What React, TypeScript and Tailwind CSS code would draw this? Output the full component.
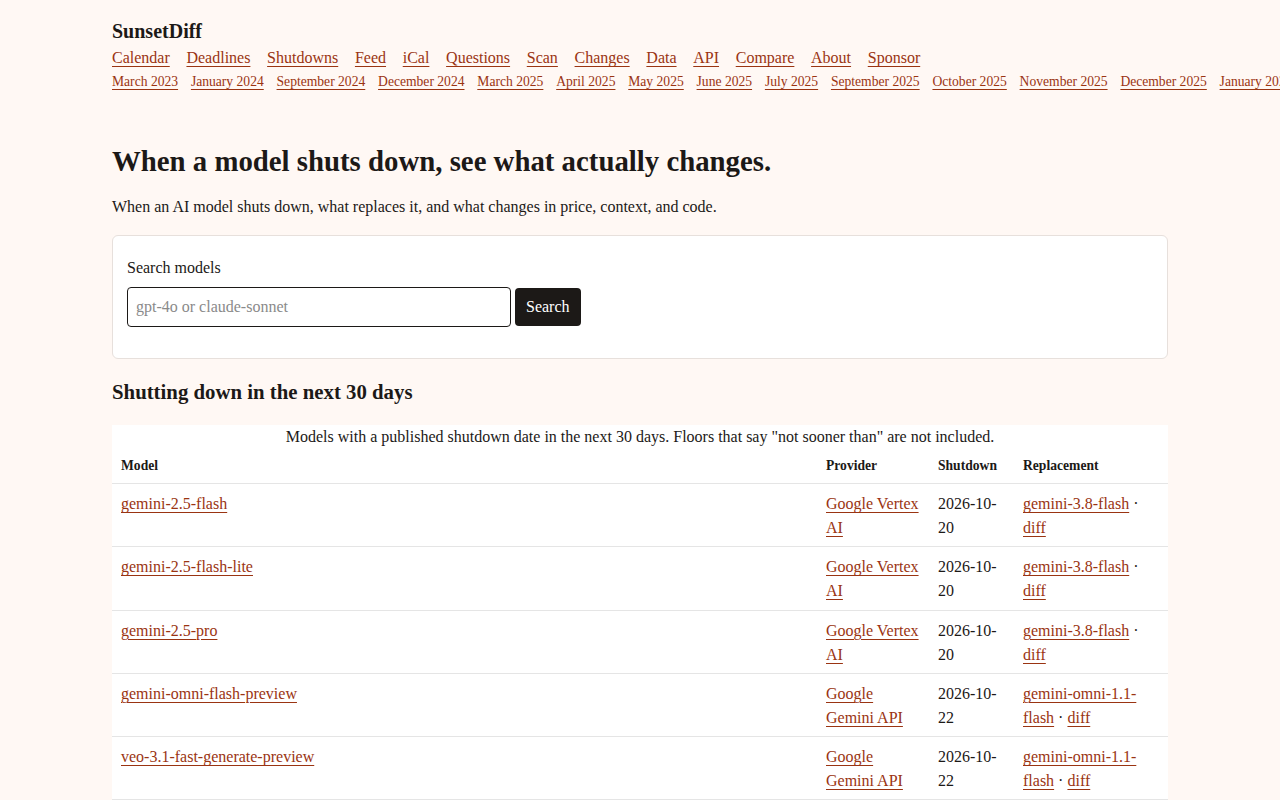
import React from "react";

const mainNav = ["Calendar", "Deadlines", "Shutdowns", "Feed", "iCal", "Questions", "Scan", "Changes", "Data", "API", "Compare", "About", "Sponsor"];
const months = ["March 2023", "January 2024", "September 2024", "December 2024", "March 2025", "April 2025", "May 2025", "June 2025", "July 2025", "September 2025", "October 2025", "November 2025", "December 2025", "January 2026"];

type Row = { model: string; provider: string; date: string; replacement: string };

const rows: Row[] = [
  { model: "gemini-2.5-flash", provider: "Google Vertex AI", date: "2026-10-20", replacement: "gemini-3.8-flash" },
  { model: "gemini-2.5-flash-lite", provider: "Google Vertex AI", date: "2026-10-20", replacement: "gemini-3.8-flash" },
  { model: "gemini-2.5-pro", provider: "Google Vertex AI", date: "2026-10-20", replacement: "gemini-3.8-flash" },
  { model: "gemini-omni-flash-preview", provider: "Google Gemini API", date: "2026-10-22", replacement: "gemini-omni-1.1-flash" },
  { model: "veo-3.1-fast-generate-preview", provider: "Google Gemini API", date: "2026-10-22", replacement: "gemini-omni-1.1-flash" },
];

const link = "text-[#9a3412] underline underline-offset-[3px] decoration-1";

export default function App() {
  return (
    <div
      className="min-h-screen overflow-x-hidden bg-[#fff8f4] text-[#1c1917]"
      style={{ fontFamily: '"Liberation Serif", "Times New Roman", serif' }}
    >
      <div className="mx-auto w-[1056px] pt-[17px] pb-10">
        <header>
          <div className="text-[20px] font-bold leading-[28px]">SunsetDiff</div>
          <nav className="mt-[1px] flex gap-[16.7px] text-[16px] leading-[24px]">
            {mainNav.map((n) => (
              <a key={n} href="#" className={link}>{n}</a>
            ))}
          </nav>
          <nav className="mt-[2px] flex gap-[12.8px] whitespace-nowrap text-[13.6px] leading-[20px]">
            {months.map((m) => (
              <a key={m} href="#" className={link}>{m}</a>
            ))}
          </nav>
        </header>

        <main className="mt-[51px]">
          <h1 className="text-[28.8px] font-bold leading-[36px]">When a model shuts down, see what actually changes.</h1>
          <p className="mt-[16px] text-[16px] leading-[24px]">
            When an AI model shuts down, what replaces it, and what changes in price, context, and code.
          </p>

          <form className="mt-[16px] rounded-[6px] border border-[#e7e0dc] bg-white px-[14px] pt-[20px] pb-[31px]">
            <label className="block text-[16px] leading-[24px]">Search models</label>
            <div className="mt-[7px] flex items-center gap-[4px]">
              <input
                type="text"
                placeholder="gpt-4o or claude-sonnet"
                className="h-[40px] w-[384px] rounded-[4px] border border-[#1c1917] bg-white px-[8px] text-[16px] placeholder:text-[#8a8a8a] outline-none"
                style={{ fontFamily: '"Liberation Serif", serif' }}
              />
              <button
                type="button"
                className="h-[38px] rounded-[4px] bg-[#1c1917] px-[11px] text-[16px] text-white"
                style={{ fontFamily: '"Liberation Serif", serif' }}
              >
                Search
              </button>
            </div>
          </form>

          <h2 className="mt-[19px] text-[20.8px] font-bold leading-[28px]">Shutting down in the next 30 days</h2>

          <div className="mt-[19px] bg-white">
            <div className="text-center text-[16px] leading-[24px]">
              Models with a published shutdown date in the next 30 days. Floors that say "not sooner than" are not included.
            </div>
            <table className="w-full table-fixed border-collapse text-left">
              <colgroup>
                <col className="w-[705px]" />
                <col className="w-[112px]" />
                <col className="w-[85px]" />
                <col className="w-[154px]" />
              </colgroup>
              <thead>
                <tr className="border-b border-[#e5e5e5] text-[13.6px] font-bold leading-[19px]">
                  <th className="px-[9px] pt-[7px] pb-[8px]">Model</th>
                  <th className="px-[9px] pt-[7px] pb-[8px]">Provider</th>
                  <th className="px-[9px] pt-[7px] pb-[8px]">Shutdown</th>
                  <th className="px-[9px] pt-[7px] pb-[8px]">Replacement</th>
                </tr>
              </thead>
              <tbody className="text-[16px] leading-[24px]">
                {rows.map((r) => (
                  <tr key={r.model} className="border-b border-[#e5e5e5] align-top">
                    <td className="px-[9px] pt-[8px] pb-[6.25px]">
                      <a href="#" className={link}>{r.model}</a>
                    </td>
                    <td className="px-[9px] pt-[8px] pb-[6.25px]">
                      <a href="#" className={link}>{r.provider}</a>
                    </td>
                    <td className="px-[9px] pt-[8px] pb-[6.25px]">{r.date}</td>
                    <td className="px-[9px] pt-[8px] pb-[6.25px]">
                      <a href="#" className={link}>{r.replacement}</a> · <a href="#" className={link}>diff</a>
                    </td>
                  </tr>
                ))}
              </tbody>
            </table>
          </div>
        </main>
      </div>
    </div>
  );
}
